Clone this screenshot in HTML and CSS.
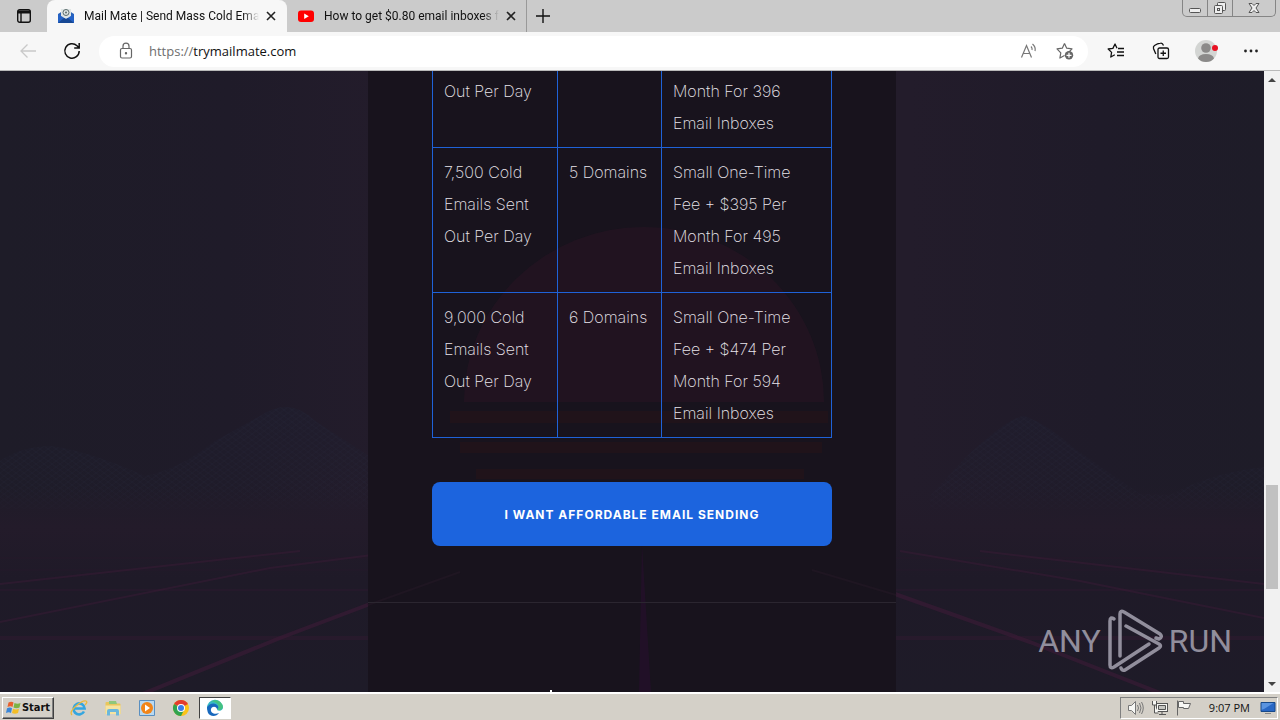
FILE: index.html
```html
<!DOCTYPE html>
<html lang="en">
<head>
<meta charset="utf-8">
<meta name="viewport" content="width=device-width, initial-scale=1">
<title>Mail Mate | Send Mass Cold Emails</title>
<link rel="stylesheet" href="styles.css">
</head>
<body>
<header class="tabs">
  <button class="tab-menu" aria-label="Tab actions">
    <svg width="16" height="16" viewBox="0 0 16 16" fill="none" stroke="#111" stroke-width="1.4"><rect x="1.700" y="1.700" width="12.600" height="12.600" rx="2"/><path d="M2 4h12" stroke-width="3"/><path d="M5 5v9"/></svg>
  </button>
  <div class="tab tab-active">
    <svg class="favicon" width="18" height="16" viewBox="0 0 18 16"><path d="M1 6 9 1l8 5v9H1z" fill="#2a62b8"/><path d="M4 1h10v8l-5 3-5-3z" fill="#dfe6e6"/><circle cx="9" cy="4.500" r="3" fill="none" stroke="#5c6c6c"/><circle cx="9" cy="4.500" r="1" fill="#5c6c6c"/><path d="m1 6 8 5 8-5v9H1z" fill="#2462c6"/><path d="m1 15 6-5 2 1 2-1 6 5z" fill="#174894"/></svg>
    <button class="tab-title">Mail Mate | Send Mass Cold Ema</button>
    <button class="tab-close" aria-label="Close tab"><svg width="10" height="10" viewBox="0 0 10 10" stroke="#222" stroke-width="1.600"><path d="m1 1 8 8M9 1 1 9"/></svg></button>
  </div>
  <div class="tab">
    <svg class="favicon" width="18" height="16" viewBox="0 0 18 16"><rect x="1" y="2.500" width="16" height="11.500" rx="3" fill="#f00"/><path d="M7.200 5.500v5.500l4.600-2.750z" fill="#fff"/></svg>
    <button class="tab-title">How to get $0.80 email inboxes f</button>
    <button class="tab-close" aria-label="Close tab"><svg width="10" height="10" viewBox="0 0 10 10" stroke="#222" stroke-width="1.600"><path d="m1 1 8 8M9 1 1 9"/></svg></button>
  </div>
  <button class="tab-new" aria-label="New tab"><svg width="14" height="14" viewBox="0 0 14 14" stroke="#111" stroke-width="1.400"><path d="M7 0v14M0 7h14"/></svg></button>
  <div class="window-controls">
    <button class="window-button" aria-label="Minimize"><svg width="14" height="14" viewBox="0 0 14 14" fill="#eee" stroke="#555"><rect x="1.500" y="7.500" width="11" height="4" rx="1"/></svg></button>
    <button class="window-button" aria-label="Restore"><svg width="14" height="14" viewBox="0 0 14 14" fill="#eee" stroke="#555"><rect x="4.500" y="1.500" width="8" height="8" rx="1"/><rect x="1.500" y="4.500" width="8" height="8" rx="1"/><rect x="4.500" y="7.500" width="2" height="2"/></svg></button>
    <button class="window-button window-close" aria-label="Close"><svg width="14" height="14" viewBox="0 0 14 14" fill="#eee" stroke="#555"><path d="M2 2.500h3l2 2 2-2h3L9 7l3 4.500H9l-2-2-2 2H2L5 7z"/></svg></button>
  </div>
</header>

<nav class="toolbar">
  <button class="tool" aria-label="Back"><svg width="18" height="16" viewBox="0 0 18 16" fill="none" stroke="#c9c9c9" stroke-width="1.300"><path d="M17 8H2M8.500 1.500 2 8l6.500 6.500"/></svg></button>
  <button class="tool" aria-label="Reload"><svg width="18" height="18" viewBox="0 0 18 18" fill="none" stroke="#111" stroke-width="1.500"><path d="M16.200 9A7.200 7.200 0 1 1 14 3.800l2 2M16.200 1v5h-5"/></svg></button>
  <div class="address">
    <svg class="lock" width="14" height="18" viewBox="0 0 14 18" fill="none" stroke="#666" stroke-width="1.200"><rect x="1.500" y="6.500" width="11" height="9.500" rx="1.500"/><path d="M4 6.500V4.200a3 3 0 0 1 6 0v2.300"/><circle cx="7" cy="11.200" r=".6" fill="#666"/></svg>
    <label class="scheme" for="url">https://</label>
    <input class="url" id="url" type="text" value="trymailmate.com">
    <button class="address-tool" aria-label="Read aloud"><svg width="18" height="18" viewBox="0 0 18 18" fill="none" stroke="#777" stroke-width="1.200"><path d="M1.500 15.500 6.500 3.500l5 12M3.200 11.500h6.600M11 4.500q1.500 1.500 1 3.500M12.500 2q3.500 3 2.500 7"/></svg></button>
    <button class="address-tool" aria-label="Add to favorites"><svg width="18" height="18" viewBox="0 0 18 18" fill="none" stroke="#666" stroke-width="1.200"><path d="m8.500 1.500 2.200 4.700 5.300.7-3.500 3.600M8.500 13.500 3.900 16l.9-5.200L1 6.900l5.300-.7 2.200-4.700" stroke-linejoin="round"/><circle cx="13" cy="13.300" r="4.200" fill="#666" stroke="none"/><path d="M13 10.800v5M10.500 13.300h5" stroke="#fff"/></svg></button>
  </div>
  <div class="tools">
    <button class="tool" aria-label="Favorites"><svg width="18" height="18" viewBox="0 0 18 18" fill="none" stroke="#111" stroke-width="1.300"><path d="M10 6.200 8 2 5.900 6.400 1.200 7l3.400 3.400L3.800 15l4-2.200M11 6.500h6M10 10h7M10 13.500h7" stroke-linejoin="round"/></svg></button>
    <button class="tool" aria-label="Collections"><svg width="18" height="18" viewBox="0 0 18 18" fill="none" stroke="#111" stroke-width="1.300"><rect x="6" y="6" width="10.500" height="10.500" rx="1.500"/><path d="M11.250 8.500V14M8.500 11.250H14M3.800 12 1.500 6.500Q1 4.500 2.500 3.500q3-1.800 6-2.300Q10.500.8 11.500 3.500"/></svg></button>
    <button class="tool" aria-label="Profile"><svg width="24" height="24" viewBox="0 0 24 24"><circle cx="12" cy="12" r="11" fill="#d3d5d3"/><circle cx="12" cy="9" r="4.800" fill="#8b8a89"/><path d="M4 19.500Q5 15 12 15t8 4.500Q17 23 12 23t-8-3.500" fill="#8b8a89"/><circle cx="21" cy="9" r="3" fill="#e81123"/></svg></button>
    <button class="tool" aria-label="Settings and more"><svg width="16" height="16" viewBox="0 0 16 16" fill="#222"><circle cx="2.500" cy="8" r="1.400"/><circle cx="8" cy="8" r="1.400"/><circle cx="13.500" cy="8" r="1.400"/></svg></button>
  </div>
</nav>

<div class="viewport">
  <main class="page">
    <svg class="scene" viewBox="0 0 1264 621" preserveAspectRatio="xMidYMid slice" aria-hidden="true">
      <defs>
        <linearGradient id="sky"><stop offset="0" stop-color="#1e1c28"/><stop offset=".18" stop-color="#1f1b29"/><stop offset=".3" stop-color="#231c2b"/><stop offset=".72" stop-color="#231c2b"/><stop offset=".87" stop-color="#1f1b29"/><stop offset="1" stop-color="#1e1c28"/></linearGradient>
        <linearGradient id="ground" x2="0" y2="1"><stop offset="0" stop-color="#231b2a" stop-opacity="0"/><stop offset=".2" stop-color="#231b2a"/><stop offset=".45" stop-color="#1f1a28"/><stop offset="1" stop-color="#1e1b28"/></linearGradient>
        <linearGradient id="ridge" x2="0" y2="1"><stop offset="0" stop-color="#1f1f30" stop-opacity=".5"/><stop offset="1" stop-color="#1f1f30" stop-opacity="0"/></linearGradient>
        <pattern id="mesh" width="8" height="6" patternUnits="userSpaceOnUse"><path d="M0 0 8 6M0 6 8 0" stroke="#292a3d" stroke-width=".5" opacity=".35"/></pattern>
      </defs>
      <path d="M0 0h1264v621H0z" fill="url(#sky)"/>
      <path d="M0 390Q20 376 50 375 90 380 145 405 180 398 215 370L260 345Q290 325 315 350L400 405V438H0zM930 425 965 387Q1010 345 1025 345 1050 355 1075 378L1140 423 1170 424Q1210 402 1264 396V438H930z" fill="url(#ridge)"/>
      <path d="M0 390Q20 376 50 375 90 380 145 405 180 398 215 370L260 345Q290 325 315 350L400 405V438H0zM930 425 965 387Q1010 345 1025 345 1050 355 1075 378L1140 423 1170 424Q1210 402 1264 396V438H930z" fill="url(#mesh)"/>
      <path d="M0 415h1264v206H0z" fill="url(#ground)"/>
      <g fill="none" stroke="#401b39" stroke-opacity=".55">
        <path d="M0 487h1264M0 499h1264" stroke-opacity=".2"/>
        <path d="M0 519h1264" stroke-width="2" stroke-opacity=".2"/>
        <path d="M0 567h1264" stroke-width="4" stroke-opacity=".3"/>
        <path d="M0 513 300 480M0 551 270 497 380 483M1264 513 980 480M1264 547 1080 510 900 480" stroke-width="2" stroke-opacity=".4"/>
        <path d="M140 624 280 567 370 533 460 501M1165 624 1030 571 895 523 810 499" stroke-width="4"/>
      </g>
      <path d="M368 0h528v621H368z" fill="#18131d"/>
      <path d="M464 331a180 175 0 0 1 360 0z" fill="#221421" opacity=".9"/>
      <path d="M450 340h378v12H450zM460 371h362v11H460zM476 398h328v10H476z" fill="#241419" opacity=".7"/>
      <path d="m642 474 9 147h-12z" fill="#24102a" opacity=".8"/>
      <path d="m460 501-92 33M812 499l84 25" stroke="#1f1622" stroke-width="2"/>
    </svg>
    <article class="card">
      <section class="offer">
        <table class="plans">
          <colgroup><col class="col-volume"><col class="col-domains"><col class="col-price"></colgroup>
          <tbody>
            <tr class="plan-continued"><td>Out Per Day</td><td></td><td>Month For 396 Email Inboxes</td></tr>
            <tr><td>7,500 Cold Emails Sent Out Per Day</td><td>5 Domains</td><td>Small One-Time Fee + $395 Per Month For 495 Email Inboxes</td></tr>
            <tr><td>9,000 Cold Emails Sent Out Per Day</td><td>6 Domains</td><td>Small One-Time Fee + $474 Per Month For 594 Email Inboxes</td></tr>
          </tbody>
        </table>
        <button class="cta">I want affordable email sending</button>
      </section>
    </article>
    <div class="watermark">
      <span>ANY</span>
      <svg width="56" height="64" viewBox="0 0 56 64" fill="none" stroke="#918e9c" stroke-width="3.500" stroke-linecap="round" stroke-linejoin="round"><path d="M7 10Q3 7 3 12v44q0 4 4 2l35-23"/><path d="M13 47V5q0-4 4-2l36 22q3 3-1 5l-3-1M19 17l33 18q3 2 0 4L18 61q-3 1-4-2"/></svg>
      <span>RUN</span>
    </div>
    <span class="pointer"></span>
  </main>
  <div class="scrollbar">
    <button class="scroll-arrow" aria-label="Scroll up"><svg width="8" height="4" viewBox="0 0 8 4"><path d="m0 4 4-4 4 4z" fill="#444"/></svg></button>
    <div class="scroll-before"></div>
    <div class="scroll-thumb"></div>
    <div class="scroll-after"></div>
    <button class="scroll-arrow" aria-label="Scroll down"><svg width="8" height="4" viewBox="0 0 8 4"><path d="m0 0 4 4 4-4z" fill="#444"/></svg></button>
  </div>
</div>

<footer class="taskbar">
  <button class="start"><svg width="16" height="16" viewBox="0 0 16 16"><path d="M2.500 2.500q3-1.500 5 0L6.500 7q-2-1.500-5 0z" fill="#e8602c"/><path d="M8.500 3q3 1.500 6 0l-1 4.500q-3 1.500-6 0z" fill="#7cb342"/><path d="M1 8.200q3-1.500 5 0L5 13q-2-1.500-5 0z" fill="#3a86d8"/><path d="M7 8.700q3 1.500 6 0L12 13q-3 1.500-6 0z" fill="#f3bd26"/></svg>Start</button>
  <div class="launchers">
    <button class="launcher" aria-label="Internet Explorer"><svg width="18" height="18" viewBox="0 0 18 18" fill="none"><path d="M14 12.500a5.500 5.500 0 1 1 .6-3H5" stroke="#35a6df" stroke-width="2.600"/><path d="M2 16Q-1 13 6 7t10-5q2 1-1 4" stroke="#ecb93a" stroke-width="1.300"/></svg></button>
    <button class="launcher" aria-label="File Explorer"><svg width="18" height="18" viewBox="0 0 18 18"><path d="M1.500 4q0-1 1-1h4l1.500 1.500h7.500q1 0 1 1V15h-15z" fill="#e9c65c"/><path d="M5 2h7l1 3H5z" fill="#8fc77a"/><path d="M1.500 6.500h15V15h-15z" fill="#f6e3a0"/><path d="M3 16.500V12q0-2 2-2h8q2 0 2 2v4.500h-3V13H6v3.500z" fill="#6bb7dc"/></svg></button>
    <button class="launcher" aria-label="Media Player"><svg width="18" height="18" viewBox="0 0 18 18"><path d="M1.500 1.500h15v15h-15z" fill="#b9d9f1" stroke="#5a8fc0"/><circle cx="9" cy="9" r="6" fill="#f28519"/><path d="m7 5.500 5 3.500-5 3.500z" fill="#fff"/></svg></button>
    <button class="launcher" aria-label="Chrome"><svg width="18" height="18" viewBox="0 0 18 18"><circle cx="9" cy="9" r="8" fill="#fbc318"/><path d="M9 9 2.070 5A8 8 0 0 1 15.930 5z" fill="#e33b2e"/><path d="M9 9 2.070 5A8 8 0 0 0 9 17l3-6z" fill="#30a34f"/><circle cx="9" cy="9" r="4" fill="#fff"/><circle cx="9" cy="9" r="3" fill="#3b7de8"/></svg></button>
    <button class="launcher launcher-active" aria-label="Edge"><svg width="18" height="18" viewBox="0 0 18 18"><path d="M1 9a8 8 0 0 1 16-.5c0 3-3.500 4-6 2.500 1-2-.5-4-3-4-3 0-5 1.500-7 4z" fill="#35b9c5"/><path d="M1 8c4-5 9-4 11-1 1 2 0 3-1 3-1-3-5-3-6 0-1 4 4 6 8 4-2 3-6 4-9 2-2-1-3-4-3-8z" fill="#1768bd"/><path d="M5 2.500c5-3 11 0 12 5 0 3-3.500 4-5.500 3C15 6 9 2 5 2.500" fill="#4bc45d" opacity=".65"/></svg></button>
  </div>
  <div class="tray">
    <svg width="18" height="18" viewBox="0 0 18 18" fill="#f7f7f4" stroke="#777"><path d="M1.500 6.500h3l4-4v13l-4-4h-3z"/><path d="M10.500 6q2 3 0 6M12.500 4q3 5 0 10M14.500 3q3.500 6 0 12" fill="none"/></svg>
    <svg width="18" height="18" viewBox="0 0 18 18" fill="#f7f7f4" stroke="#555"><rect x="5.500" y="4.500" width="11" height="8"/><path d="M7.500 6.500h7v4h-7z" fill="#c6c6c2"/><path d="M8 15.500h7M11 13v2M1.500 2v4h4V2M3.500 6v8h4"/></svg>
    <svg width="18" height="18" viewBox="0 0 18 18" fill="#f7f7f4" stroke="#666"><path d="M3.500 2.500h5v2h7l-2 5h-5v-1h-5z"/><path d="M2.500 1.500v15"/></svg>
    <time class="clock">9:07 PM</time>
    <svg width="16" height="16" viewBox="0 0 16 16"><path d="M1 2h14v10H1z" fill="#2867c4"/><path d="M1 2h14L4 9l-3 1z" fill="#5a94e0"/><path d="M1 2.500h14v9H1z" fill="none" stroke="#174989"/><path d="M5 13h6v1H5z" fill="#888"/></svg>
  </div>
</footer>
</body>
</html>
```
FILE: styles.css
```css
* { box-sizing: border-box; }
html { height: 100%; }
body {
  margin: 0;
  height: 100%;
  display: flex;
  flex-direction: column;
  overflow: hidden;
  background: #18131d;
  font-family: "Open Sans", "Noto Sans", sans-serif;
  font-size: 12px;
  color: #111;
}
button {
  margin: 0;
  padding: 0;
  border: 0;
  background: none;
  font: inherit;
  color: inherit;
  display: flex;
  align-items: center;
  justify-content: center;
}
svg { flex: none; }

.tabs { display: flex; flex: none; height: 32px; background: #cbcbcb; }
.tab-menu { width: 47px; }
.tab {
  width: 240px;
  display: flex;
  align-items: center;
  padding: 0 9px 0 10px;
  border-right: 1px solid #999;
}
.tab-active { background: #f7f7f7; border-right-color: #f7f7f7; border-radius: 8px 8px 0 0; }
.tab-title {
  flex: 1;
  min-width: 0;
  margin: 0 6px 0 9px;
  justify-content: flex-start;
  white-space: nowrap;
  font-family: Roboto, sans-serif;
  mask-image: linear-gradient(90deg, #000 calc(100% - 16px), transparent);
}
.tab-close { flex: none; width: 12px; height: 20px; }
.tab-new { width: 32px; }
.window-controls {
  display: flex;
  height: 17px;
  margin: 0 4px 0 auto;
  border: 1px solid #858585;
  border-top: 0;
  border-radius: 0 0 5px 5px;
}
.window-button { width: 25px; border-right: 1px solid #858585; }
.window-close { width: 42px; border-right: 0; }

.toolbar {
  flex: none;
  display: flex;
  align-items: center;
  height: 39px;
  padding: 0 7px 0 6px;
  background: #f7f7f7;
  border-bottom: 1px solid #b9b9b9;
}
.tool { width: 44px; height: 32px; }
.tools { display: flex; gap: 1px; margin-left: 6px; }
.address {
  flex: 1;
  display: flex;
  align-items: center;
  height: 31px;
  margin-left: 5px;
  padding: 0 14px 0 20px;
  border-radius: 16px;
  background: #fff;
  font-size: 13px;
}
.scheme { margin-left: 16px; color: #6e6e6e; }
.url {
  flex: 1;
  min-width: 0;
  padding: 0;
  border: 0;
  outline: 0;
  background: none;
  font: inherit;
  color: #111;
}
.address-tool { width: 18px; height: 28px; margin-left: 18px; }

.viewport { flex: 1; min-height: 0; display: flex; }
.page { position: relative; flex: 1; min-width: 0; overflow: hidden; }
.scene { position: absolute; inset: 0; width: 100%; height: 100%; }
.card { position: relative; max-width: 528px; margin: 0 auto; }
.offer { padding: 0 64px 56px; border-bottom: 1px solid #2b2630; }
.plans {
  width: 100%;
  table-layout: fixed;
  border-collapse: separate;
  border-spacing: 0;
  border: solid #1f62d8;
  border-width: 0 1px 1px 0;
  font-family: Inter, sans-serif;
  font-size: 16px;
  font-weight: 200;
  line-height: 32px;
  color: #e9e5ec;
}
.col-volume { width: 125px; }
.col-domains { width: 104px; }
.plans td {
  padding: 8px 11px;
  vertical-align: top;
  border: solid #1f62d8;
  border-width: 1px 0 0 1px;
}
.plans .plan-continued td { padding-top: 4px; border-top-width: 0; }
.cta {
  width: 100%;
  height: 64px;
  margin-top: 44px;
  border-radius: 8px;
  background: #1c64de;
  color: #fff;
  font-family: Inter, sans-serif;
  font-size: 12px;
  font-weight: 700;
  letter-spacing: 1px;
  text-transform: uppercase;
}
.watermark {
  position: absolute;
  right: 32px;
  bottom: 19px;
  display: flex;
  align-items: center;
  gap: 6px;
  color: #918e9c;
  font-family: Roboto, sans-serif;
  font-size: 32px;
  font-weight: 400;
  line-height: 64px;
}
.pointer { position: absolute; left: 550px; bottom: 0; width: 2px; height: 2px; background: #fff; }

.scrollbar { flex: none; width: 16px; display: flex; flex-direction: column; align-items: center; background: #f1f1f1; }
.scroll-arrow { width: 16px; height: 17px; }
.scroll-before { flex: 397; }
.scroll-thumb { flex: 104; width: 12px; background: #c1c1c1; }
.scroll-after { flex: 86; }

.taskbar {
  flex: none;
  display: flex;
  align-items: center;
  height: 28px;
  padding: 1px 2px 0;
  background: #d4d0c8;
  border-top: 2px solid #fff;
}
.start {
  width: 52px;
  height: 22px;
  border: 1px solid;
  border-color: #fff #404040 #404040 #fff;
  box-shadow: inset -1px -1px #808080;
  font-family: "DejaVu Sans Condensed", sans-serif;
  font-weight: 700;
  font-size: 11px;
}
.launchers { display: flex; gap: 2px; margin-left: 9px; }
.launcher { width: 32px; height: 22px; }
.launcher-active {
  background: #fff;
  border: 1px solid;
  border-color: #404040 #fff #fff #404040;
}
.tray {
  display: flex;
  align-items: center;
  gap: 6px;
  height: 22px;
  margin-left: auto;
  padding: 0 1px 0 6px;
  border: 1px solid;
  border-color: #808080 #fff #fff #808080;
}
.clock { margin: 0 4px 0 10px; font-size: 11px; }
```
